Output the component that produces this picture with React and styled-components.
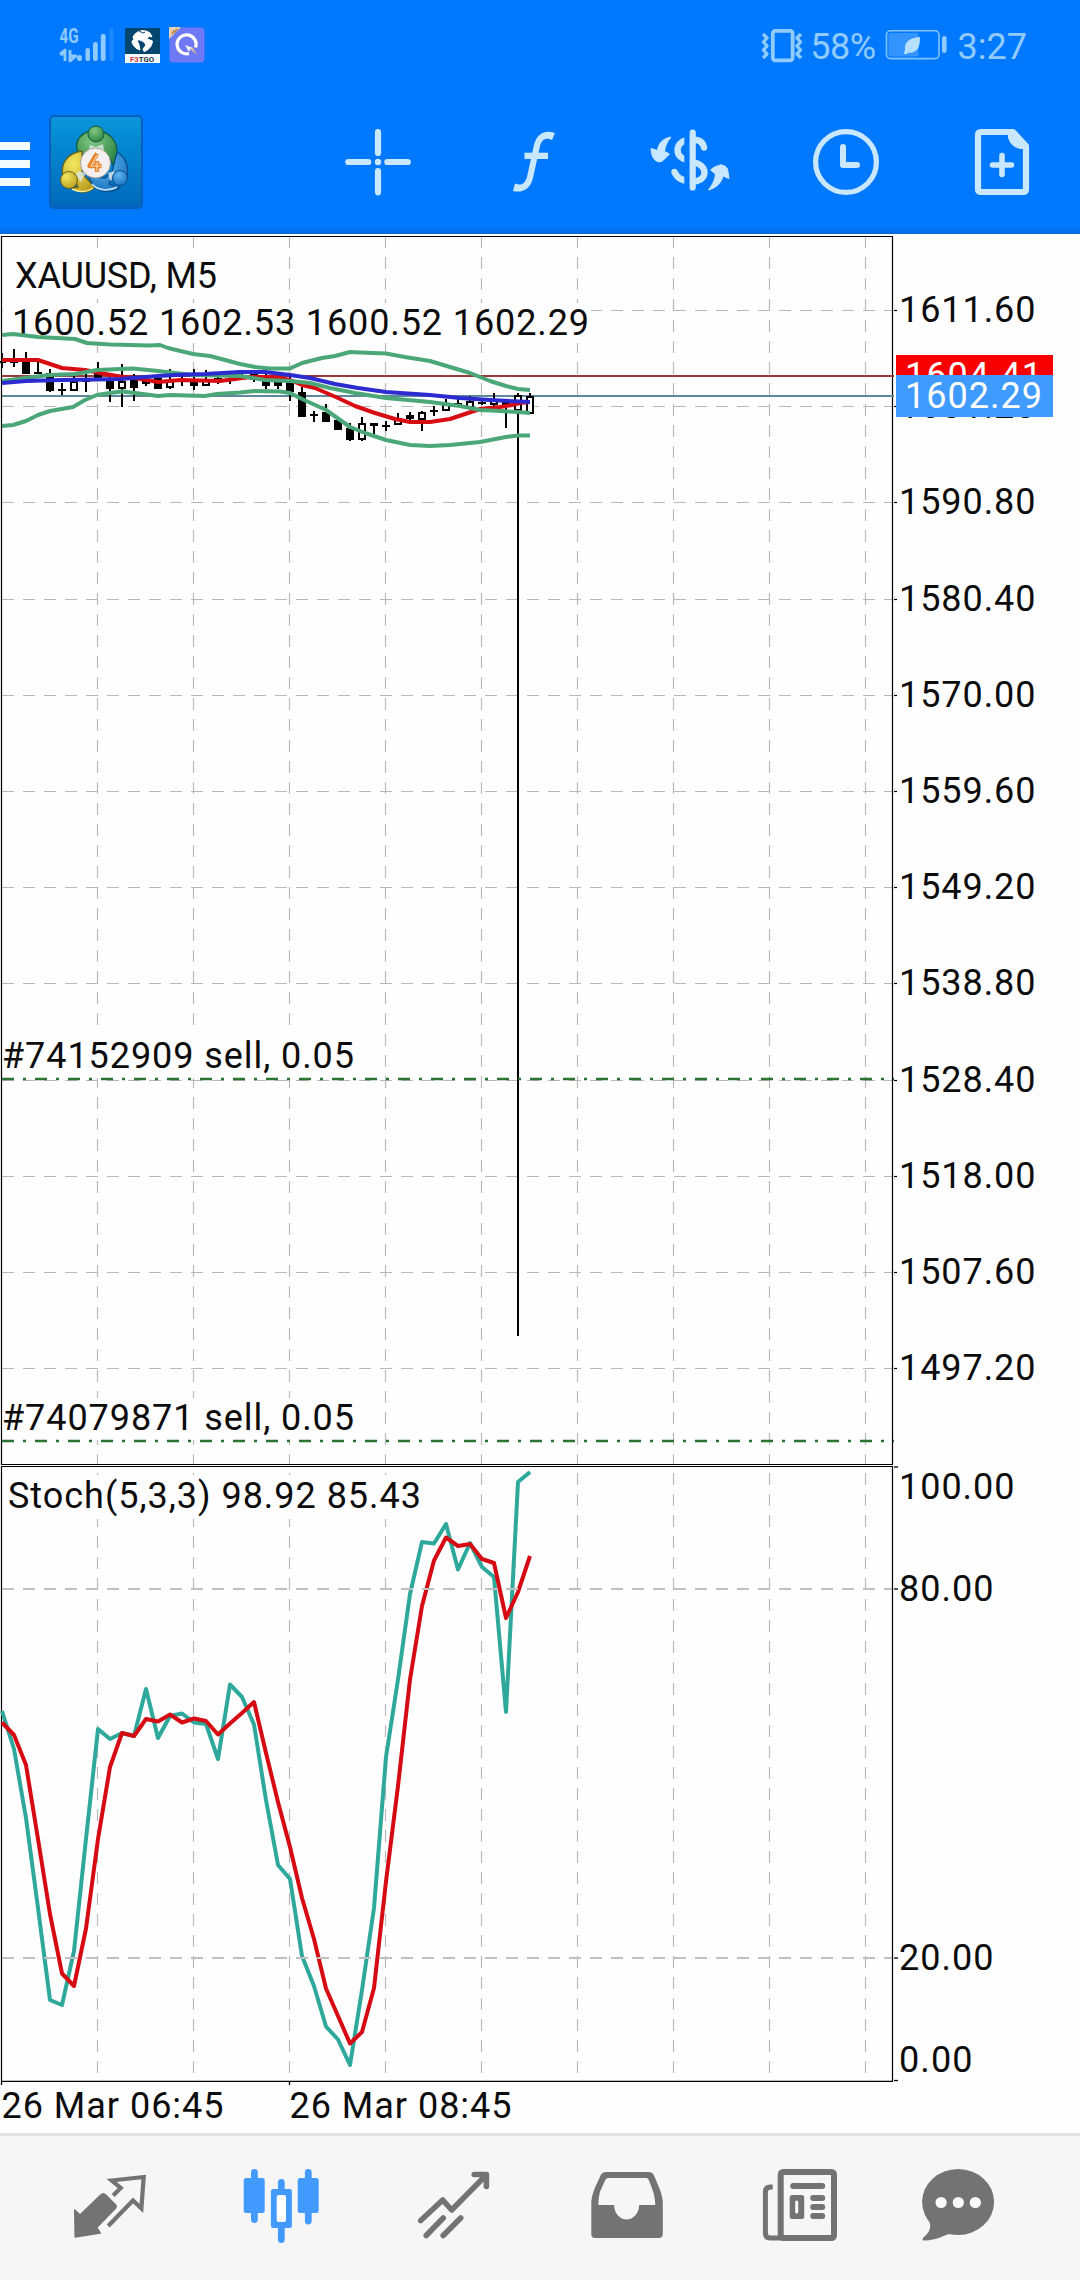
import React from "react";
import styled, { createGlobalStyle } from "styled-components";

const GlobalStyle = createGlobalStyle`
  * { box-sizing: border-box; }
  body { margin: 0; background: #fefefe; font-family: Roboto, "Open Sans", sans-serif; }
  svg { display: block; }
`;

const Screen = styled.main`
  width: 1080px;
  height: 2280px;
  display: flex;
  flex-direction: column;
  background: #fefefe;
  overflow: hidden;
`;

const Header = styled.header`
  flex: none;
  height: 234px;
  display: flex;
  flex-direction: column;
  background: linear-gradient(#0079ff 0 226px, #0172ee 231px, #0a66d8 234px);
`;

const StatusBar = styled.div`
  height: 90px;
  display: flex;
  justify-content: space-between;
  align-items: center;
  padding: 0 53px 0 56px;
`;

const StatusGroup = styled.div`
  display: flex;
  align-items: center;
  gap: ${(p) => p.$gap}px;
`;

const StatusText = styled.span`
  color: #90ccff;
  font-size: 36px;
  line-height: 40px;
  padding-top: 3px;
  letter-spacing: ${(p) => p.$tracking || 0}px;
  margin-right: ${(p) => p.$after || 0}px;
`;

const Toolbar = styled.div`
  height: 144px;
  display: flex;
  align-items: center;
`;

const MenuButton = styled.div`
  width: 30px;
  height: 44px;
  margin-top: 4px;
  display: flex;
  flex-direction: column;
  justify-content: space-between;
`;

const MenuBar = styled.span`
  height: 8px;
  background: #f3fcff;
`;

const AppLogo = styled.div`
  width: 94px;
  height: 94px;
  margin-left: 19px;
`;

const Actions = styled.div`
  margin-left: auto;
  display: flex;
`;

const ActionButton = styled.div`
  width: 156px;
  display: flex;
  justify-content: center;
  color: #c9e7ff;
`;

const ChartGrid = styled.section`
  flex: none;
  display: grid;
  grid-template-columns: 894px 186px;
  grid-template-rows: 1231px 617px 51px;
`;

const ChartSvg = styled.svg`
  width: 100%;
  height: 100%;
  font-family: Roboto, "Open Sans", sans-serif;
  font-size: 36px;
  fill: #0c0c0c;
`;

const TimeRow = styled.div`
  grid-column: 1 / -1;
`;

const BottomNav = styled.nav`
  flex: 1;
  display: flex;
  align-items: center;
  border-top: 3px solid #e1e1e1;
  background: #f6f6f6;
  padding: 0 21px;
`;

const NavItem = styled.div`
  width: 173px;
  display: flex;
  justify-content: center;
  color: ${(p) => (p.$active ? "#429aff" : "#737373")};
`;

/* ---------- status icons ---------- */

const SignalIcon = () => (
  <svg width="60" height="40" viewBox="56 25 60 40" fill="#8ccaff">
    <text x="59.5" y="43" fontSize="20.5" fontWeight="700" textLength="19" lengthAdjust="spacingAndGlyphs" fontFamily="Roboto, sans-serif">4G</text>
    <path d="M60 54L65 50V61M60 54H65M70 50V61L76 56H70" fill="none" stroke="#8ccaff" strokeWidth="2.8" strokeLinejoin="round" />
    <rect x="77" y="55" width="5" height="6" rx="2.5" />
    <rect x="85.500" y="48" width="4.500" height="13" rx="2" />
    <rect x="93" y="42" width="4.800" height="19" rx="2" />
    <rect x="100.800" y="34" width="4.800" height="27" rx="2" />
    <rect x="109.500" y="28" width="4" height="33" rx="2" opacity=".22" />
  </svg>
);

const NewsAppIcon = () => (
  <svg width="35" height="35" viewBox="0 0 35 35">
    <rect width="35" height="27" fill="#02466f" />
    <rect y="26" width="35" height="9" fill="#f4fbff" />
    <path d="M10 6C14 2 20 1.500 25 5L27 9L24 8L22 11L25 12L27.500 13C27 18 24 22 19 23.500L18 21L21 17L19 14L15 12L12 12L14 17L15 22C11 21 7 17 7 13L9 12L8 9Z" fill="#fff" stroke="#fff" strokeLinejoin="round" />
    <path d="M14 3L18 5L20 4" stroke="#02466f" fill="none" />
    <text x="5" y="33.500" fontSize="8" fontWeight="700" textLength="24" lengthAdjust="spacingAndGlyphs" fontFamily="Roboto, sans-serif" fill="#24303c">
      <tspan fill="#d33a3a">F3</tspan>TGO
    </text>
  </svg>
);

const QuickAppIcon = () => (
  <svg width="36" height="36" viewBox="0 0 36 36">
    <rect x=".500" y=".500" width="35" height="35" rx="4" fill="#6f79f5" />
    <path d="M.5 0H12L0 12V1Z" fill="#e6cfae" />
    <path d="M3 7L5 4L6 5L8 2" stroke="#b98442" strokeWidth="1.500" fill="none" />
    <path d="M20 26.500A9.500 9.500 0 1 1 26.500 20.500" fill="none" stroke="#fff" strokeWidth="3.200" />
    <path d="M16 18L24 21L21 22L20 25Z" fill="#fff" />
    <path d="M21 22L24 21L28 28Z" fill="#d8b897" />
  </svg>
);

const VibrateIcon = () => (
  <svg width="44" height="36" viewBox="762 27 44 36" fill="none" stroke="#90ccff">
    <rect x="773.800" y="30.800" width="19.800" height="29.500" rx="2.500" strokeWidth="3.800" />
    <path d="M764 34L768 38L764.500 42L768 46L764.500 50L768 54L764 58M802 34L798 38L801.500 42L798 46L801.500 50L798 54L802 58" strokeWidth="3.400" strokeLinejoin="round" />
  </svg>
);

const BatteryIcon = () => (
  <svg width="68" height="32" viewBox="885 30 68 32">
    <rect x="886.500" y="31.800" width="52.500" height="27.800" rx="4" fill="none" stroke="#80c4ff" strokeWidth="1.600" />
    <rect x="888.500" y="34" width="30" height="23.500" rx="2" fill="#3393ff" />
    <rect x="942" y="37" width="4.600" height="17" rx="2.300" fill="#90ccff" />
    <path d="M920 38C909 39 904 43 905 51L904 55H907L913 46L908 54C917 54 920 49 920 38Z" fill="#b5e0ff" />
  </svg>
);

/* ---------- toolbar icons ---------- */

const LogoIcon = () => (
  <svg width="94" height="94" viewBox="49 115 94 94">
    <defs>
      <linearGradient id="tile" x1="0" y1="0" x2="0" y2="1">
        <stop offset="0" stopColor="#0c96dc" />
        <stop offset=".4" stopColor="#0283cd" />
        <stop offset="1" stopColor="#0168bb" />
      </linearGradient>
      <radialGradient id="green" cx=".4" cy=".3" r=".8">
        <stop offset="0" stopColor="#83c883" />
        <stop offset="1" stopColor="#1f7f3c" />
      </radialGradient>
      <radialGradient id="gold" cx=".35" cy=".3" r=".8">
        <stop offset="0" stopColor="#f3e85f" />
        <stop offset="1" stopColor="#b99b1c" />
      </radialGradient>
      <radialGradient id="azure" cx=".4" cy=".3" r=".8">
        <stop offset="0" stopColor="#5fb7f0" />
        <stop offset="1" stopColor="#146dbb" />
      </radialGradient>
    </defs>
    <rect x="50" y="116" width="92" height="92" rx="4" fill="url(#tile)" stroke="#0760bd" strokeWidth="2" />
    <path d="M78 152C73 140 83 131 95 130C110 131 118 142 117 154L114 166L107 154Q96 142 86 156Z" fill="url(#green)" stroke="#135c40" strokeWidth="1.300" />
    <path d="M82 151C68 153 60 163 63 176L73 175L78 187L72 188C80 194 89 193 95 187L82 174Z" fill="url(#gold)" stroke="#67631a" strokeWidth="1.300" />
    <path d="M117 152C125 157 129 164 127 176L118 176C113 176 110 178 109 184L120 188C105 196 91 189 89 176L105 178L112 172Z" fill="url(#azure)" stroke="#0b4b8c" strokeWidth="1.300" />
    <path d="M79 171L86 173L81 182L75 175ZM108 173L114 171L116 177L110 181ZM90 145L96 147L103 144L104 151H89Z" fill="#ddebe8" opacity=".8" />
    <path d="M92 184C97 190 108 192 117 187" fill="none" stroke="#b9e0f8" strokeWidth="1.800" />
    <path d="M72 189C80 193 88 192 93 188" fill="none" stroke="#f6ee9a" strokeWidth="1.400" />
    <circle cx="96" cy="134" r="8" fill="url(#green)" stroke="#135c40" strokeWidth="1" />
    <circle cx="69" cy="180" r="8.500" fill="url(#gold)" stroke="#67631a" strokeWidth="1" />
    <circle cx="120" cy="178" r="7.500" fill="url(#azure)" stroke="#0b4b8c" strokeWidth="1" />
    <circle cx="95.500" cy="163" r="15" fill="#f3efee" stroke="#a9a49c" strokeWidth="1" />
    <path d="M97 153.500L89.500 166H101.500M97 161V172" fill="none" stroke="#e8852c" strokeWidth="4.400" strokeLinejoin="round" />
    <path d="M97 155L91 166H100.500M97 162V171" fill="none" stroke="#fbe3b8" strokeWidth="1" />
  </svg>
);

const CrosshairIcon = () => (
  <svg width="72" height="72" viewBox="342 126 72 72" fill="none" stroke="currentColor" strokeWidth="6.200" strokeLinecap="round">
    <path d="M348.300 162H368.300M387.300 162H407.800M378 132V153M378 171V192.300" />
    <circle cx="378" cy="162" r="3.200" fill="currentColor" stroke="none" />
  </svg>
);

const FunctionIcon = () => (
  <svg width="72" height="72" viewBox="498 126 72 72" fill="currentColor">
    <path d="M555 133L552 140C546 137 542 139 540 146L533 178C530 190 522 193 513 191L515 183.500C521 186 525 184 527 177L533.500 147C536 134 544 129 555 133Z" />
    <rect x="524.500" y="152.700" width="23.500" height="6.300" />
  </svg>
);

const TradeIcon = () => (
  <svg width="82" height="72" viewBox="649 126 82 72">
    <path d="M704 147.500C703 141 698 139.500 692 139.500C683 139.500 677.500 144 677.500 150C677.500 158 685 159.500 692 161.500C700 164 704.500 166.500 704.500 172.500C704.500 179 698 181.500 692 181.500C683 181.500 677 178 674.500 172" fill="none" stroke="currentColor" strokeWidth="6.400" strokeLinecap="round" />
    <rect x="684.300" y="134" width="5.700" height="52" fill="#0079ff" />
    <path d="M692.700 132.500V187.500" stroke="currentColor" strokeWidth="6.200" strokeLinecap="round" />
    <path d="M671 137C663 138.500 658.500 143 657.500 150.500L651 148.500C651.500 155 653 158.500 655.500 160.500Q660 163.500 663 160.500L669.500 154L664.500 151.500C665 146 667.500 141 671 137Z" fill="currentColor" stroke="currentColor" strokeLinejoin="round" />
    <path d="M708.500 190C713 184 715 179 715.500 174L710.500 170C714 166.500 717.500 166 721 164.800Q726 165.500 727.500 169L729 178.500L723 176C721.500 183 716 188 708.500 190Z" fill="currentColor" stroke="currentColor" strokeLinejoin="round" />
  </svg>
);

const ClockIcon = () => (
  <svg width="72" height="72" viewBox="810 126 72 72" fill="none" stroke="currentColor" strokeLinecap="round" strokeLinejoin="round">
    <circle cx="846" cy="162" r="30.400" strokeWidth="5.200" />
    <path d="M843 147V165H857" strokeWidth="6" />
  </svg>
);

const NewDocumentIcon = () => (
  <svg width="72" height="72" viewBox="966 126 72 72" fill="none" stroke="currentColor" strokeLinecap="round">
    <path d="M1013 132H981Q978 132 978 135V189Q978 192 981 192H1023Q1026 192 1026 189V146Z" strokeWidth="6.200" strokeLinejoin="round" />
    <path d="M1008 133L1027 146V148.500H1020Q1008 146 1008 133Z" fill="currentColor" stroke="currentColor" />
    <path d="M992.500 165H1011.500M1002 155.500V174.500" strokeWidth="5.600" />
  </svg>
);

/* ---------- chart data ---------- */

const barX = (i) => 2 + i * 12;

// [wick top, wick bottom, body top, body bottom, kind]
const candles = [
  [353, 368, 361, 363, "doji"], [349, 367, 361, 363, "doji"], [352, 374, 361, 374, "down"],
  [361, 374, 372, 374, "doji"], [369, 392, 373, 391, "down"], [383, 395, 389, 391, "doji"],
  [375, 391, 381, 391, "up"], [373, 392, 380, 382, "doji"], [362, 380, 372, 378, "down"],
  [377, 402, 380, 389, "down"], [364, 407, 381, 389, "up"], [374, 401, 377, 388, "down"],
  [378, 386, 381, 384, "doji"], [374, 389, 378, 389, "down"], [369, 389, 380, 388, "up"],
  [376, 386, 379, 382, "doji"], [369, 390, 380, 386, "down"], [370, 386, 380, 386, "up"],
  [376, 384, 378, 381, "doji"], [372, 384, 379, 381, "doji"], [373, 380, 375, 377, "doji"],
  [372, 382, 373, 380, "down"], [373, 389, 380, 386, "down"], [378, 389, 380, 386, "down"],
  [377, 401, 381, 392, "down"], [387, 417, 392, 417, "down"], [411, 422, 414, 416, "doji"],
  [404, 422, 412, 422, "down"], [417, 430, 420, 430, "down"], [423, 441, 428, 440, "down"],
  [417, 441, 423, 440, "up"], [423, 434, 423, 426, "doji"], [421, 431, 425, 427, "doji"],
  [413, 425, 418, 425, "up"], [412, 421, 415, 419, "down"], [411, 431, 412, 420, "up"],
  [406, 416, 410, 412, "doji"], [399, 411, 404, 411, "up"], [399, 407, 403, 405, "doji"],
  [396, 409, 401, 408, "up"], [400, 405, 402, 404, "doji"], [393, 408, 400, 405, "up"],
  [401, 428, 402, 406, "down"], [393, 1336, 395, 411, "up"], [393, 414, 396, 414, "up"],
];

const upperBand = "2,335 13,334 38,337 75,339 87,343 110,344.5 150,345.500 160,345 168,348 193,354 210,356 240,364 255,367 270,368.500 290,368.500 302,363 322,358 335,356 350,352 360,352.500 386,353.500 405,357 430,361 450,367 470,373 490,381 506,386 518,389 530,390";
const middleBand = "2,381 25,378 50,375 75,374 97,370 133,368.500 158,371 193,375 240,376 265,380 290,381 310,383 330,388 355,393 386,398 430,402 460,406 480,410 500,411 518,412 530,413";
const lowerBand = "2,426 13,425 26,421 38,415 50,411 73,407 85,400 97,395 110,393 122,391.500 135,393 158,396 170,395 205,396 217,394 240,392.500 255,391 280,391.500 290,393 302,399 326,410 350,427 365,433 386,440 410,445 430,446 450,445 480,442 506,437 518,435.500 530,435.500";
const fastAverage = "2,360 38,360 50,364 62,368 85,370 100,373 120,376.500 135,378 158,382 180,380 220,381 250,377 275,377 290,380 302,385 315,388 338,398 355,406 375,413 395,419 410,422 430,422 450,419 465,414 480,409 500,407 512,405 520,403 530,402";
const slowAverage = "2,383 26,381 62,380 97,379.500 120,379 158,376 175,375 205,374 240,372 265,372 290,375 310,378 335,384 358,388 386,392 430,395 460,398 490,400 530,402";

const stochMain = [
  1711, 1749, 1818, 1908, 2000, 2005, 1951, 1839, 1729, 1739, 1733, 1736, 1689, 1738, 1716,
  1713.5, 1722.5, 1724, 1759, 1684.5, 1697, 1724.5, 1800, 1865, 1879, 1956, 1986, 2026.5,
  2039.5, 2065, 1990, 1908, 1757, 1679.5, 1594, 1542, 1543.5, 1524, 1569.5, 1543, 1567,
  1577, 1712, 1482, 1472,
];
const stochSignal = [
  1722.5, 1735, 1765, 1839, 1914, 1973.5, 1986, 1928.5, 1839, 1767, 1733, 1736, 1719, 1721.5,
  1714.5, 1722.5, 1718.5, 1721, 1734.5, 1723.5, 1713, 1702, 1753, 1802, 1847, 1898, 1939,
  1988.5, 2016, 2043.5, 2032, 1988, 1881.5, 1786, 1679.5, 1606, 1560.5, 1537.5, 1546, 1544,
  1559, 1563, 1618, 1592, 1556,
];

const toPoints = (values) => values.map((y, i) => `${barX(i)},${y}`).join(" ");

const columns = [97, 193, 289, 385, 481, 577, 673, 769, 865];
const prices = ["1611.60", "1601.20", "1590.80", "1580.40", "1570.00", "1559.60", "1549.20", "1538.80", "1528.40", "1518.00", "1507.60", "1497.20"];
const priceY = (i) => Math.round(309.9 + i * 96.2);

const GridLine = (props) => <line stroke="#b8b8b8" strokeWidth="1.200" strokeDasharray="12 9" {...props} />;
const OrderLine = ({ y }) => <line x1="2" x2="894" y1={y} y2={y} stroke="#2b7330" strokeWidth="2.400" strokeDasharray="12 9 3 9" />;
const LabelBacking = (props) => <rect x="3" fill="#fefefe" {...props} />;

const Candle = ({ index, data }) => {
  const [top, bottom, open, close, kind] = data;
  const x = barX(index);
  return (
    <g>
      <line x1={x} x2={x} y1={top} y2={bottom} stroke="#000" strokeWidth="2" />
      {kind === "up" ? (
        <rect x={x - 3} y={open + 1} width="6" height={close - open - 2} fill="#fff" stroke="#000" strokeWidth="2" />
      ) : (
        <rect x={x - 4} y={open} width="8" height={close - open} fill="#000" />
      )}
    </g>
  );
};

const PricePlot = () => (
  <ChartSvg viewBox="0 234 894 1231">
    {columns.map((x) => <GridLine key={x} x1={x + 0.5} x2={x + 0.5} y1="236" y2="1464" />)}
    {prices.map((p, i) => <GridLine key={p} x1="2" x2="892" y1={priceY(i) + 0.5} y2={priceY(i) + 0.5} />)}
    <LabelBacking y="250" width="216" height="47" />
    <LabelBacking y="303" width="588" height="40" />
    <LabelBacking y="1032" width="354" height="46" />
    <LabelBacking y="1398" width="354" height="42" />
    <path d="M1.500 1465V236.500H892.500V1465M1 1464.500H893" fill="none" stroke="#000" strokeWidth="1.200" />
    <text x="15" y="288" textLength="202">XAUUSD, M5</text>
    <text x="12" y="334.500" textLength="577">1600.52 1602.53 1600.52 1602.29</text>
    <line x1="2" x2="894" y1="376" y2="376" stroke="#9c3a3a" strokeWidth="2" />
    <line x1="2" x2="894" y1="396" y2="396" stroke="#5f889c" strokeWidth="1.800" />
    {candles.map((c, i) => <Candle key={i} index={i} data={c} />)}
    <g fill="none" strokeWidth="4" strokeLinejoin="round">
      <polyline points={fastAverage} stroke="#d80d14" />
      <polyline points={upperBand} stroke="#4ba678" />
      <polyline points={middleBand} stroke="#4ba678" />
      <polyline points={lowerBand} stroke="#4ba678" />
      <polyline points={slowAverage} stroke="#2b2bd0" />
    </g>
    <text x="2" y="1068" textLength="352">#74152909 sell, 0.05</text>
    <OrderLine y={1079} />
    <text x="2" y="1430" textLength="352">#74079871 sell, 0.05</text>
    <OrderLine y={1441} />
  </ChartSvg>
);

const PriceAxis = () => (
  <ChartSvg viewBox="894 234 186 1231">
    {prices.map((p, i) => (
      <g key={p}>
        <line x1="893" x2="897" y1={priceY(i) + 0.5} y2={priceY(i) + 0.5} stroke="#000" strokeWidth="1.200" />
        <text x="899" y={priceY(i) + 12} textLength="136.500">{p}</text>
      </g>
    ))}
    <rect x="896" y="355" width="157" height="42" fill="#f90000" />
    <text x="905" y="388" textLength="137" fill="#fff">1604.41</text>
    <rect x="896" y="375" width="157" height="42" fill="#3f9bff" />
    <text x="905" y="407.500" textLength="137" fill="#fff">1602.29</text>
  </ChartSvg>
);

const StochPlot = () => (
  <ChartSvg viewBox="0 1465 894 617">
    {columns.map((x) => <GridLine key={x} x1={x + 0.5} x2={x + 0.5} y1="1473" y2="2080" />)}
    <LabelBacking y="1475" width="418" height="44" />
    <path d="M1.500 2082V1466.500H892.500V2082M1 2081.300H893" fill="none" stroke="#000" strokeWidth="1.200" />
    <text x="8" y="1508" textLength="413">Stoch(5,3,3) 98.92 85.43</text>
    <g fill="none" strokeWidth="4" strokeLinejoin="round">
      <polyline points={toPoints(stochMain)} stroke="#2ea89b" />
      <polyline points={toPoints(stochSignal)} stroke="#d60a12" />
    </g>
    {[1589, 1958].map((y) => <GridLine key={y} x1="2" x2="892" y1={y} y2={y} stroke="#c0c0c0" strokeWidth="1.800" />)}
  </ChartSvg>
);

const StochAxis = () => (
  <ChartSvg viewBox="894 1465 186 617">
    {[1467, 1589, 1958, 2080.5].map((y) => <line key={y} x1="893" x2="898" y1={y} y2={y} stroke="#000" strokeWidth="1.300" />)}
    <text x="899" y="1499" textLength="115.500">100.00</text>
    <text x="899" y="1601" textLength="94.500">80.00</text>
    <text x="899" y="1970" textLength="94.500">20.00</text>
    <text x="899" y="2071.500" textLength="73.500">0.00</text>
  </ChartSvg>
);

const TimeAxis = () => (
  <ChartSvg viewBox="0 2082 1080 51">
    <path d="M1.500 2081V2085M289.500 2081V2085" stroke="#000" strokeWidth="1.300" />
    <text x="1.500" y="2117.500" textLength="222">26 Mar 06:45</text>
    <text x="289.500" y="2117.500" textLength="222">26 Mar 08:45</text>
  </ChartSvg>
);

/* ---------- navigation icons ---------- */

const NavSvg = ({ cx, children }) => (
  <svg width="110" height="90" viewBox={`${cx - 55} 2163 110 90`} fill="none" stroke="currentColor" strokeLinecap="round" strokeLinejoin="round">
    {children}
  </svg>
);

const QuotesIcon = () => (
  <NavSvg cx={108.3}>
    <path d="M75 2210L80.300 2215L101 2195Q103.500 2192.500 106 2195L116 2205Q117 2206.500 116 2208L97 2227.500L100.500 2233L75.500 2237Z" fill="currentColor" strokeWidth="1.500" />
    <path d="M113.500 2195.500L121 2188L112 2180.500L144 2177L141.700 2208.500L133.300 2200.500L108.500 2226" strokeWidth="4.200" strokeLinecap="butt" strokeLinejoin="miter" />
  </NavSvg>
);

const ChartsIcon = () => (
  <NavSvg cx={281.3}>
    <g fill="currentColor" stroke="none">
      <rect x="251.300" y="2169" width="6.800" height="54" rx="3.400" />
      <rect x="244" y="2178" width="21" height="35" rx="2.500" />
      <rect x="305.200" y="2169" width="6.800" height="55.500" rx="3.400" />
      <rect x="298" y="2178" width="21" height="35" rx="2.500" />
      <rect x="278.200" y="2179" width="6.800" height="64" rx="3.400" />
      <rect x="271.200" y="2189" width="21" height="39" rx="2.500" />
      <rect x="277" y="2195" width="9.300" height="27" rx="2" fill="#fff" />
    </g>
  </NavSvg>
);

const TradeTabIcon = () => (
  <NavSvg cx={453.8}>
    <path d="M420.500 2220.500L442.500 2200L451.500 2210L486 2175M474 2174.500H486.200V2186.500M426 2235.500L443 2218M443 2235.500L460.500 2218" strokeWidth="5.600" />
  </NavSvg>
);

const HistoryIcon = () => (
  <NavSvg cx={626.7}>
    <path fillRule="evenodd" stroke="none" fill="currentColor" d="M606 2172H648Q652 2172 653.500 2175L659 2188Q662.500 2197 662.500 2203V2234Q662.500 2238 658.500 2238H595Q591 2238 591 2234V2203Q591 2197 594.500 2188L600.500 2175Q602 2172 606 2172ZM608 2178Q606 2178 605 2180L599.500 2192Q598 2199 598 2205H613.800A12.500 14.500 0 0 0 638.800 2205H655Q655 2199 653 2192L648.500 2180Q647.500 2178 646 2178Z" />
  </NavSvg>
);

const NewsIcon = () => (
  <NavSvg cx={800.3}>
    <rect x="781" y="2172" width="53.300" height="66" rx="2.500" strokeWidth="6" />
    <path d="M773 2187H770.500Q765.700 2187 765.700 2192V2233Q765.700 2238 770.500 2238H781" strokeWidth="5" strokeLinecap="butt" />
    <path d="M793.500 2186H822.500M813.500 2198H822.500M813.500 2207H822.500M813.500 2216H822.500" strokeWidth="6" />
    <rect x="790" y="2195" width="14.500" height="24" rx="2.500" fill="currentColor" stroke="none" />
    <path d="M797 2202V2212" stroke="#fff" strokeWidth="3" />
  </NavSvg>
);

const ChatIcon = () => (
  <NavSvg cx={972.7}>
    <g stroke="none" fill="currentColor">
      <ellipse cx="957.800" cy="2202" rx="36" ry="33" />
      <path d="M926 2216C933 2226 930 2232 922.500 2238Q921.500 2241 925 2240.500C936 2240 943 2236 951 2233Z" />
      <g fill="#fcfcfc">
        <circle cx="940.800" cy="2202.500" r="5.600" />
        <circle cx="958" cy="2202.500" r="5.600" />
        <circle cx="975" cy="2202.500" r="5.600" />
      </g>
    </g>
  </NavSvg>
);

const actions = [CrosshairIcon, FunctionIcon, TradeIcon, ClockIcon, NewDocumentIcon];
const tabs = [QuotesIcon, ChartsIcon, TradeTabIcon, HistoryIcon, NewsIcon, ChatIcon];

export default function App() {
  return (
    <>
      <GlobalStyle />
      <Screen>
        <Header>
          <StatusBar>
            <StatusGroup $gap={9}>
              <SignalIcon />
              <NewsAppIcon />
              <QuickAppIcon />
            </StatusGroup>
            <StatusGroup $gap={5}>
              <VibrateIcon />
              <StatusText $tracking={-0.5} $after={4}>58%</StatusText>
              <BatteryIcon />
              <StatusText>3:27</StatusText>
            </StatusGroup>
          </StatusBar>
          <Toolbar>
            <MenuButton>
              <MenuBar />
              <MenuBar />
              <MenuBar />
            </MenuButton>
            <AppLogo>
              <LogoIcon />
            </AppLogo>
            <Actions>
              {actions.map((Icon, i) => (
                <ActionButton key={i}>
                  <Icon />
                </ActionButton>
              ))}
            </Actions>
          </Toolbar>
        </Header>
        <ChartGrid>
          <PricePlot />
          <PriceAxis />
          <StochPlot />
          <StochAxis />
          <TimeRow>
            <TimeAxis />
          </TimeRow>
        </ChartGrid>
        <BottomNav>
          {tabs.map((Icon, i) => (
            <NavItem key={i} $active={i === 1}>
              <Icon />
            </NavItem>
          ))}
        </BottomNav>
      </Screen>
    </>
  );
}
